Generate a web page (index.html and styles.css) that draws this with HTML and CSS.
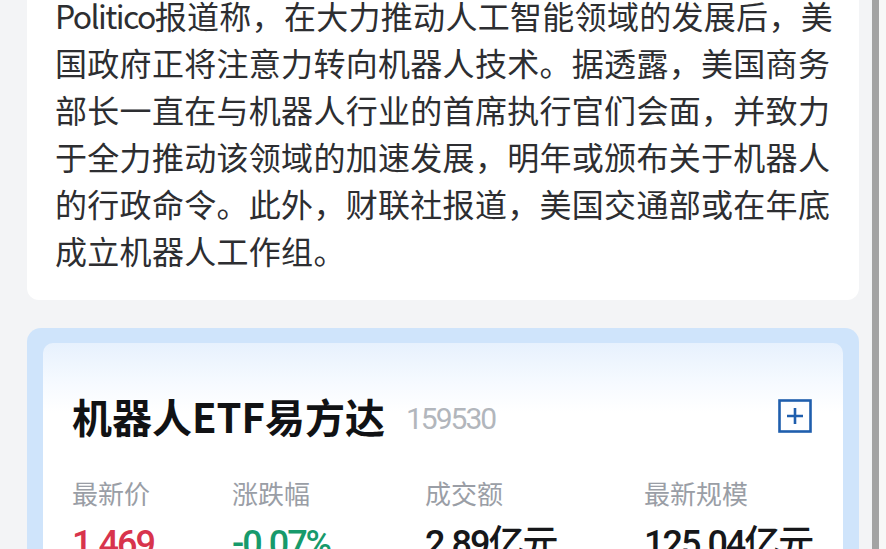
FILE: index.html
```html
<!DOCTYPE html>
<html lang="zh-CN">
<head>
<meta charset="utf-8">
<title>机器人ETF易方达</title>
<link rel="stylesheet" href="styles.css">
</head>
<body>
<div class="screen">
  <main class="feed">
    <article class="news-card">
      <p class="news-text"><span class="brand">Politico</span>报道称，在大力推动人工智能领域的发展后，美<br>国政府正将注意力转向机器人技术。据透露，美国商务<br>部长一直在与机器人行业的首席执行官们会面，并致力<br>于全力推动该领域的加速发展，明年或颁布关于机器人<br>的行政命令。此外，财联社报道，美国交通部或在年底<br>成立机器人工作组。</p>
    </article>
    <section class="etf-frame">
      <div class="etf-card">
        <div class="etf-head">
          <h2 class="etf-name">机器人ETF易方达</h2>
          <span class="etf-code">159530</span>
          <button class="add-btn" type="button" aria-label="添加自选">
            <svg viewBox="0 0 34 34" width="34" height="34">
              <rect x="1.5" y="1.5" width="31" height="31" fill="none" stroke="#1f5ead" stroke-width="2.6"/>
              <path d="M17 9v16M9 17h16" stroke="#1f5ead" stroke-width="2.6" fill="none"/>
            </svg>
          </button>
        </div>
        <div class="stats">
          <div class="stat">
            <span class="stat-label">最新价</span>
            <span class="stat-value up">1.469</span>
          </div>
          <div class="stat">
            <span class="stat-label">涨跌幅</span>
            <span class="stat-value down">-0.07%</span>
          </div>
          <div class="stat">
            <span class="stat-label">成交额</span>
            <span class="stat-value">2.89亿元</span>
          </div>
          <div class="stat">
            <span class="stat-label">最新规模</span>
            <span class="stat-value">125.04亿元</span>
          </div>
        </div>
      </div>
    </section>
  </main>
  <div class="scrollbar"><div class="thumb"></div></div>
</div>
</body>
</html>
```
FILE: styles.css
```css
html, body {
  margin: 0;
  padding: 0;
  height: 100%;
  overflow: hidden;
  background: #f3f4f6;
  font-family: "Noto Sans CJK SC", "Noto Sans", sans-serif;
}

.screen {
  display: flex;
  height: 549px;
  overflow: hidden;
}

.feed {
  flex: 1;
  min-width: 0;
  padding: 0 13px 0 27px;
  display: flex;
  flex-direction: column;
  gap: 28px;
}

.news-card {
  margin-top: -8px;
  background: #ffffff;
  border-radius: 0 0 12px 12px;
  padding: 0 14px 26px 28px;
}

.news-text {
  margin: 0;
  font-size: 32px;
  line-height: 47px;
  letter-spacing: 0.3px;
  white-space: nowrap;
  text-autospace: no-autospace;
  color: #2d2e31;
}

.brand {
  letter-spacing: -1.6px;
}

.etf-frame {
  background: #cfe4fb;
  border-radius: 14px 14px 0 0;
  padding: 15px 16px 0 16px;
  flex: 1;
  display: flex;
  flex-direction: column;
}

.etf-card {
  flex: 1;
  background: linear-gradient(180deg, #e7f1fd 0px, #f6faff 40px, #ffffff 70px);
  border-radius: 10px 10px 0 0;
  padding: 49px 31px 0 29px;
}

.etf-head {
  display: flex;
  align-items: center;
  height: 48px;
}

.etf-name {
  margin: 0;
  font-size: 40px;
  line-height: 48px;
  font-weight: 700;
  color: #111214;
}

.etf-code {
  margin-left: 21px;
  margin-top: 4px;
  font-family: "Roboto", sans-serif;
  font-size: 30px;
  letter-spacing: -2px;
  color: #b2b6bc;
}

.add-btn {
  margin-left: auto;
  padding: 0;
  border: 0;
  background: none;
  width: 34px;
  height: 34px;
  display: flex;
}

.stats {
  margin-top: 36px;
  display: grid;
  grid-template-columns: 160px 193px 219px 1fr;
}

.stat {
  display: flex;
  flex-direction: column;
  gap: 11px;
  white-space: nowrap;
}

.stat-label {
  font-size: 26px;
  line-height: 34px;
  color: #9a9ea6;
}

.stat-value {
  font-family: "Roboto", "Noto Sans CJK SC", sans-serif;
  font-weight: 500;
  font-size: 36px;
  line-height: 46px;
  letter-spacing: -2px;
  color: #16171a;
}

.stat-value.up {
  color: #d8344c;
}

.stat-value.down {
  color: #179a6b;
}

.scrollbar {
  width: 14px;
  display: flex;
  background: #f7f7f7;
}

.thumb {
  width: 7px;
  background: #a3a3a3;
}
```
